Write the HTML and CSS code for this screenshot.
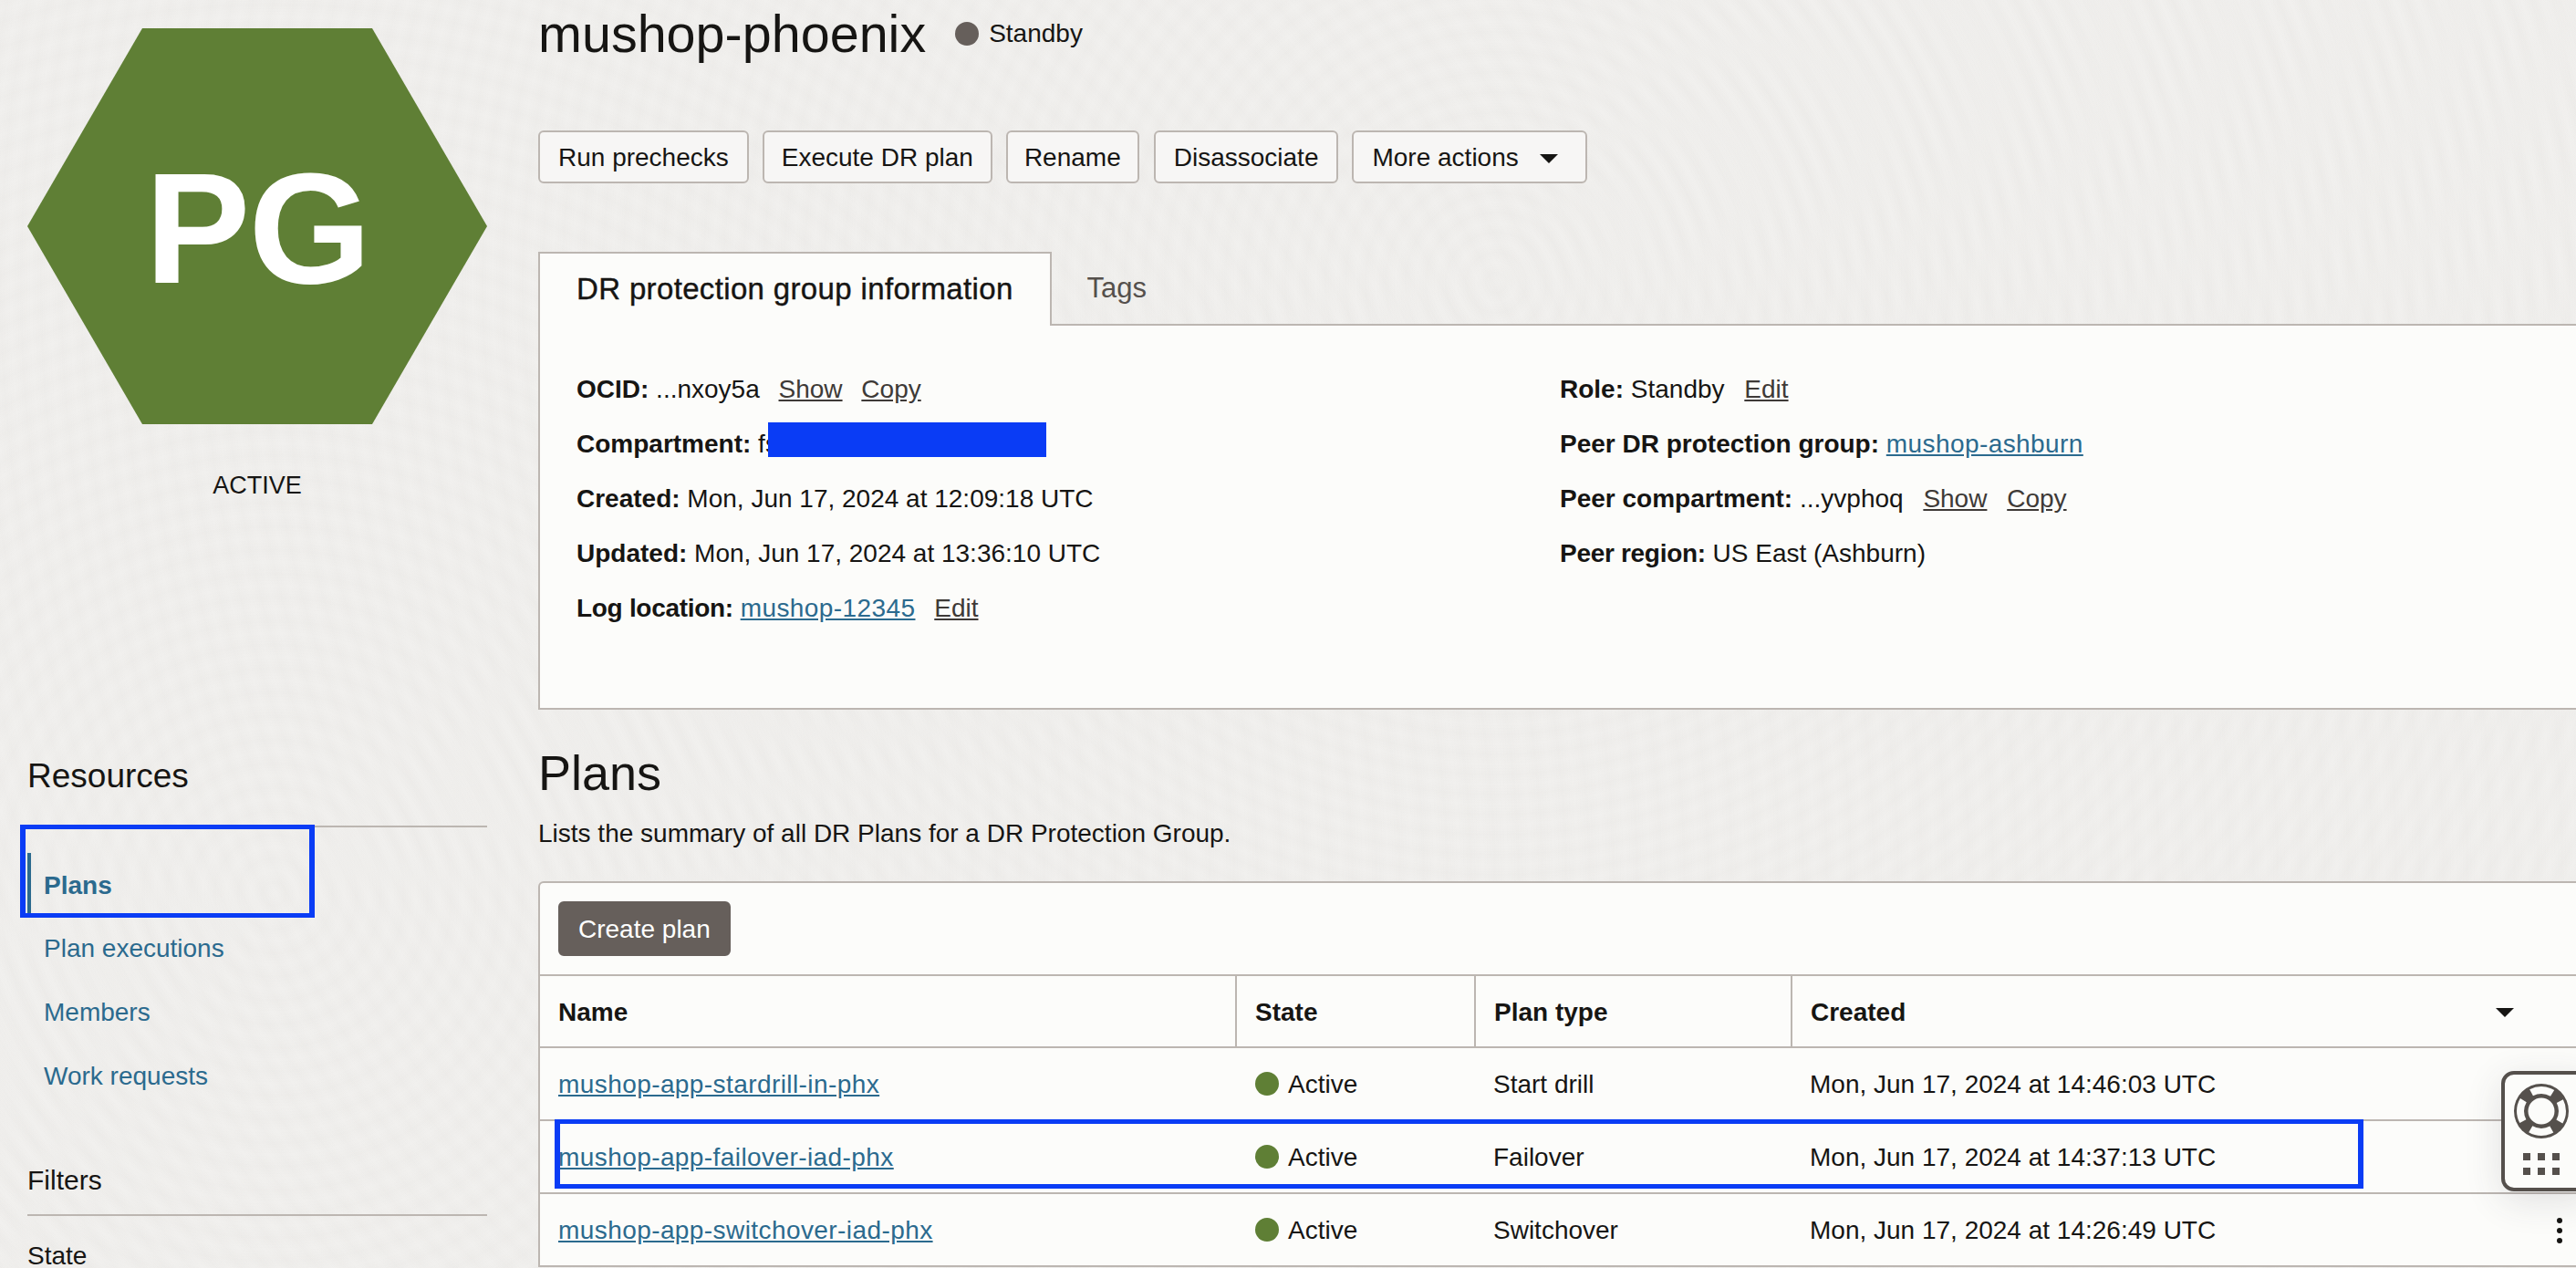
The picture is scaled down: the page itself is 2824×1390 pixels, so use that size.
FILE: index.html
```html
<!DOCTYPE html>
<html lang="en">
<head>
    <meta charset="UTF-8">
    <title>mushop-phoenix</title>
    <link rel="stylesheet" href="styles.css">
</head>
<body>
<div class="page">
    <aside class="side">
        <svg class="hex" viewBox="0 0 504 434"><polygon points="126,0 378,0 504,217 378,434 126,434 0,217"/></svg>
        <div class="hex-label">PG</div>
        <div class="state-label">ACTIVE</div>

        <h3 class="side-title resources">Resources</h3>
        <ul class="nav">
            <li class="current"><a>Plans</a><span class="mark mark-nav"></span></li>
            <li><a>Plan executions</a></li>
            <li><a>Members</a></li>
            <li><a>Work requests</a></li>
        </ul>

        <h3 class="side-title filters">Filters</h3>
        <div class="filter-name">State</div>
    </aside>

    <main class="main">
        <div class="title-row">
            <h1>mushop-phoenix</h1>
            <span class="dot dot-gray"></span>
            <span class="title-state">Standby</span>
        </div>

        <div class="actions">
            <button>Run prechecks</button>
            <button class="btn-exec">Execute DR plan</button>
            <button class="btn-rename">Rename</button>
            <button class="btn-dis">Disassociate</button>
            <button class="btn-more">More actions<svg class="caret" viewBox="0 0 20 10"><polygon points="0,0 20,0 10,10"/></svg></button>
        </div>

        <div class="tabs">
            <div class="tab active">DR protection group information</div>
            <div class="tab">Tags</div>
        </div>
        <div class="panel">
            <div class="col col-left">
                <div class="info"><b>OCID:</b> ...nxoy5a <a class="act">Show</a> <a class="act">Copy</a></div>
                <div class="info"><b>Compartment:</b> fs<span class="redact"></span></div>
                <div class="info"><b>Created:</b> Mon, Jun 17, 2024 at 12:09:18 UTC</div>
                <div class="info"><b>Updated:</b> Mon, Jun 17, 2024 at 13:36:10 UTC</div>
                <div class="info"><b class="tight">Log location:</b> <a class="link">mushop-12345</a> <a class="act">Edit</a></div>
            </div>
            <div class="col">
                <div class="info"><b>Role:</b> Standby <a class="act">Edit</a></div>
                <div class="info"><b>Peer DR protection group:</b> <a class="link">mushop-ashburn</a></div>
                <div class="info"><b>Peer compartment:</b> ...yvphoq <a class="act">Show</a> <a class="act">Copy</a></div>
                <div class="info"><b class="tight">Peer region:</b> US East (Ashburn)</div>
            </div>
        </div>

        <h2>Plans</h2>
        <p class="sub">Lists the summary of all DR Plans for a DR Protection Group.</p>

        <div class="card">
            <div class="toolbar"><button class="primary">Create plan</button></div>
            <table>
                <colgroup><col class="c1"><col class="c2"><col class="c3"><col></colgroup>
                <thead>
                    <tr>
                        <th>Name</th>
                        <th>State</th>
                        <th>Plan type</th>
                        <th><div class="cell-flex">Created<svg class="sort" viewBox="0 0 20 10"><polygon points="0,0 20,0 10,10"/></svg></div></th>
                    </tr>
                </thead>
                <tbody>
                    <tr>
                        <td><a class="link">mushop-app-stardrill-in-phx</a></td>
                        <td><span class="dot dot-green"></span>Active</td>
                        <td>Start drill</td>
                        <td>Mon, Jun 17, 2024 at 14:46:03 UTC</td>
                    </tr>
                    <tr>
                        <td><a class="link">mushop-app-failover-iad-phx</a></td>
                        <td><span class="dot dot-green"></span>Active</td>
                        <td>Failover</td>
                        <td>Mon, Jun 17, 2024 at 14:37:13 UTC</td>
                    </tr>
                    <tr>
                        <td><a class="link">mushop-app-switchover-iad-phx</a></td>
                        <td><span class="dot dot-green"></span>Active</td>
                        <td>Switchover</td>
                        <td><div class="cell-flex kebab-row">Mon, Jun 17, 2024 at 14:26:49 UTC<span class="kebab"><i></i><i></i><i></i></span></div></td>
                    </tr>
                </tbody>
            </table>
            <span class="mark mark-row"></span>
        </div>
    </main>
</div>

<div class="help">
    <svg class="buoy" viewBox="0 0 60 60">
        <circle cx="30" cy="30" r="30" fill="#55504c"/>
        <circle cx="30" cy="30" r="23" fill="none" stroke="#fcfcfa" stroke-width="8" stroke-dasharray="24.1 12" stroke-dashoffset="12"/>
        <circle cx="30" cy="30" r="14.5" fill="#fcfcfa"/>
    </svg>
    <div class="apps"><i></i><i></i><i></i><i></i><i></i><i></i></div>
</div>
</body>
</html>
```

FILE: styles.css
```css
html, body{ margin:0; padding:0; height:1390px; overflow:hidden; }
body{
    font-family:"Liberation Sans", Arial, sans-serif; font-size:28px; color:#161513;
    background-color:#f1f0ee;
    background-image:
        repeating-radial-gradient(circle at 1640px 310px, rgba(120,110,100,0) 0, rgba(120,110,100,.016) 11px, rgba(120,110,100,0) 22px),
        repeating-radial-gradient(circle at 300px 980px, rgba(120,110,100,0) 0, rgba(120,110,100,.014) 13px, rgba(120,110,100,0) 26px);
}
h1, h2, h3, p, ul{ margin:0; padding:0; font-weight:normal; }
a{ cursor:pointer; }

.page{ display:flex; gap:56px; padding-left:30px; }

/* left column */
.side{ width:504px; flex:none; padding-top:31px; position:relative; }
.hex{ display:block; width:504px; height:434px; fill:#5f7f35; }
.hex-label{ position:absolute; left:0; right:0; top:31px; height:434px; line-height:438px; text-align:center; color:#fff; font-size:173px; font-weight:bold; letter-spacing:-2px; }
.state-label{ margin-top:50px; line-height:34px; text-align:center; font-size:27px; }
.side-title{ border-bottom:2px solid #bcb6b1; }
.resources{ margin-top:280px; font-size:37px; line-height:44px; padding-bottom:32px; }
.nav{ list-style:none; margin-top:28px; }
.nav li{ height:70px; line-height:70px; padding-left:18px; color:#2b6a8e; position:relative; }
.nav li.current{ font-weight:bold; border-left:4px solid #2b6a8e; padding-left:14px; line-height:72px; }
.filters{ margin-top:59px; font-size:30px; line-height:40px; padding-bottom:17px; }
.filter-name{ margin-top:28px; line-height:32px; }

/* annotation boxes */
.mark{ position:absolute; border:solid #0a3cf5; border-width:5px 6px; box-sizing:border-box; }
.mark-nav{ left:-12px; top:-31px; width:323px; height:102px; }
.mark-row{ left:16px; top:259px; width:1983px; height:76px; }

/* header */
.main{ flex:none; width:2240px; }
.title-row{ display:flex; align-items:center; height:74px; }
h1{ font-size:57.5px; line-height:74px; }
.title-row .dot{ margin:0 11px 0 32px; }
.title-state{ font-size:28px; }
.dot{ display:inline-block; width:26px; height:26px; border-radius:50%; flex:none; }
.dot-gray{ background:#665f5b; }
.dot-green{ background:#5f7f35; vertical-align:-3px; margin:0 10px 0 1px; }

button{ font:inherit; color:inherit; height:58px; padding:2px 20px 0; background:#f7f6f5; border:2px solid #bcb6b1; border-radius:6px; }
.actions{ display:flex; gap:15px; margin-top:69px; }
.btn-exec{ padding:2px 19px 0; }
.btn-rename{ padding:2px 18px 0; }
.btn-dis{ margin-left:1px; }
.btn-more{ padding:2px 30px 0 20px; }
.caret{ width:20px; height:10px; margin-left:23px; vertical-align:3px; fill:#161513; }

.tabs{ display:flex; margin-top:75px; height:79px; border-bottom:2px solid #bcb6b1; font-size:31px; }
.tab{ padding:0 39px; line-height:80px; color:#55504c; }
.tab.active{ padding:0 40px; color:#161513; background:#fcfcfa; border:2px solid #bcb6b1; border-bottom:0; height:79px; line-height:78px; font-size:33px; letter-spacing:.35px; -webkit-text-stroke:.4px #161513; }
.panel{ display:flex; background:#fcfcfa; border:2px solid #bcb6b1; border-top:0; height:421px; padding:40px 0 0 40px; box-sizing:border-box; }
.col-left{ width:1078px; flex:none; }
.info{ height:60px; line-height:60px; position:relative; white-space:nowrap; }
.tight{ letter-spacing:-.3px; }
.act{ color:#3e3a37; text-decoration:underline; margin-left:14px; }
.col-left .act{ margin-left:13px; }
.link{ color:#2b6a8e; text-decoration:underline; letter-spacing:.42px; }
.redact{ position:absolute; left:210px; top:6px; width:305px; height:38px; background:#0a3cf5; }

h2{ font-size:54px; line-height:60px; margin-top:39px; }
.sub{ margin-top:21px; line-height:32px; }

/* plans table */
.card{ position:relative; margin-top:36px; background:#fcfcfa; border:2px solid #bcb6b1; border-bottom:0; border-radius:6px 0 0 0; }
.toolbar{ height:102px; box-sizing:border-box; padding-top:20px; border-bottom:2px solid #bcb6b1; }
button.primary{ margin-left:20px; height:60px; color:#fff; background:#665f5b; border-color:#665f5b; }
table{ width:100%; table-layout:fixed; border-collapse:collapse; }
.c1{ width:763px; }
.c2{ width:262px; }
.c3{ width:347px; }
th, td{ height:80px; box-sizing:border-box; padding:2px 0 0 20px; text-align:left; border-bottom:2px solid #bcb6b1; }
th{ height:78px; font-weight:bold; border-left:2px solid #bcb6b1; }
th:first-child{ border-left:0; }
.cell-flex{ display:flex; justify-content:space-between; align-items:center; padding-right:72px; }
.sort{ width:20px; height:10px; fill:#161513; }
.kebab-row{ padding-right:19px; }
.kebab{ display:flex; flex-direction:column; gap:5px; }
.kebab i{ display:block; width:6px; height:6px; border-radius:50%; background:#161513; }

/* floating help button */
.help{ position:absolute; left:2742px; top:1174px; width:100px; height:132px; box-sizing:border-box; background:#fcfcfa; border:4px solid #55504c; border-radius:14px; box-shadow:0 10px 40px rgba(60,60,70,.14); }
.buoy{ position:absolute; left:10px; top:10px; width:60px; height:60px; }
.apps{ position:absolute; left:20px; top:86px; display:grid; grid-template-columns:repeat(3,8px); gap:8px; }
.apps i{ display:block; height:8px; background:#55504c; }
```
